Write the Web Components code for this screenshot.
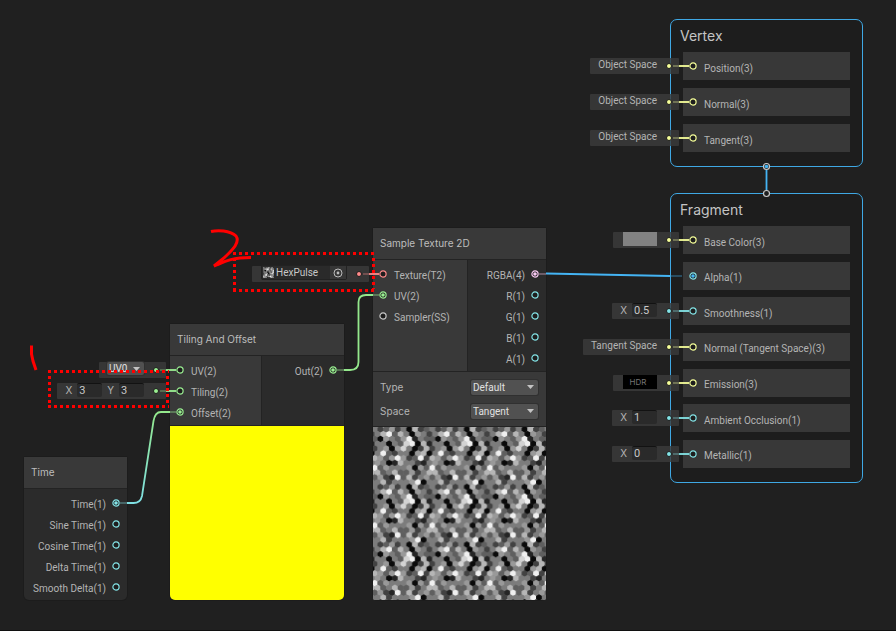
<!DOCTYPE html>
<html lang="en">
<head>
<meta charset="utf-8">
<title>Shader Graph</title>
<style>
  body {
    margin: 0;
    background: #202020;
    color: #b4b4b4;
    font: 10px/16px Roboto, "Liberation Sans", sans-serif;
  }
</style>
</head>
<body>
<shader-graph>
  <graph-node style="left: 24px; top: 457px; width: 103px" name="Time">
    <graph-port slot="out" side="out" type="float" linked>Time(1)</graph-port>
    <graph-port slot="out" side="out" type="float">Sine Time(1)</graph-port>
    <graph-port slot="out" side="out" type="float">Cosine Time(1)</graph-port>
    <graph-port slot="out" side="out" type="float">Delta Time(1)</graph-port>
    <graph-port slot="out" side="out" type="float">Smooth Delta(1)</graph-port>
  </graph-node>

  <graph-node style="left: 170px; top: 324px; width: 174px; --inputs: 53%" name="Tiling And Offset" inputs>
    <graph-port slot="in" type="vec2">UV(2)
      <inline-value slot="value"><drop-down compact label="UV channel" value="UV0"></drop-down></inline-value>
    </graph-port>
    <graph-port slot="in" type="vec2">Tiling(2)
      <inline-value slot="value"><number-field label="X" value="3"></number-field><number-field label="Y" value="3"></number-field></inline-value>
    </graph-port>
    <graph-port slot="in" type="vec2" linked>Offset(2)</graph-port>
    <graph-port slot="out" side="out" type="vec2" linked>Out(2)</graph-port>
    <node-preview slot="preview" kind="solid"></node-preview>
  </graph-node>

  <graph-node style="left: 373px; top: 228px; width: 173px" name="Sample Texture 2D" inputs>
    <graph-port slot="in" type="texture">Texture(T2)
      <inline-value slot="value"><object-field value="HexPulse"></object-field></inline-value>
    </graph-port>
    <graph-port slot="in" type="vec2" linked>UV(2)</graph-port>
    <graph-port slot="in" type="sampler">Sampler(SS)</graph-port>
    <graph-port slot="out" side="out" type="vec4" linked>RGBA(4)</graph-port>
    <graph-port slot="out" side="out" type="float">R(1)</graph-port>
    <graph-port slot="out" side="out" type="float">G(1)</graph-port>
    <graph-port slot="out" side="out" type="float">B(1)</graph-port>
    <graph-port slot="out" side="out" type="float">A(1)</graph-port>
    <node-settings slot="settings">
      <drop-down label="Type" value="Default" show-label></drop-down>
      <drop-down label="Space" value="Tangent" show-label></drop-down>
    </node-settings>
    <node-preview slot="preview" kind="hex"></node-preview>
  </graph-node>

  <block-stack style="left: 670px; top: 19px; width: 193px; height: 148px" name="Vertex">
    <graph-port type="vec3">Position(3)<inline-value slot="value">Object Space</inline-value></graph-port>
    <graph-port type="vec3">Normal(3)<inline-value slot="value">Object Space</inline-value></graph-port>
    <graph-port type="vec3">Tangent(3)<inline-value slot="value">Object Space</inline-value></graph-port>
  </block-stack>

  <block-stack style="left: 670px; top: 193px; width: 193px; height: 290px" name="Fragment">
    <graph-port type="vec3">Base Color(3)<inline-value slot="value"><color-swatch label="Base Color" color="#828282"></color-swatch></inline-value></graph-port>
    <graph-port type="float" linked="#44b4f4">Alpha(1)</graph-port>
    <graph-port type="float">Smoothness(1)<inline-value slot="value"><number-field label="X" value="0.5"></number-field></inline-value></graph-port>
    <graph-port type="vec3">Normal (Tangent Space)(3)<inline-value slot="value">Tangent Space</inline-value></graph-port>
    <graph-port type="vec3">Emission(3)<inline-value slot="value"><color-swatch label="Emission" color="#000000">HDR</color-swatch></inline-value></graph-port>
    <graph-port type="float">Ambient Occlusion(1)<inline-value slot="value"><number-field label="X" value="1"></number-field></inline-value></graph-port>
    <graph-port type="float">Metallic(1)<inline-value slot="value"><number-field label="X" value="0"></number-field></inline-value></graph-port>
  </block-stack>

  <graph-wires slot="overlay"></graph-wires>
  <hand-notes slot="overlay"></hand-notes>
</shader-graph>

<script>
const PORT_COLORS = {
  float: "#84e4e7",
  vec2: "#9aef92",
  vec3: "#f6ff9a",
  vec4: "#fbcbf4",
  texture: "#ff8b8b",
  sampler: "#c8c8c8",
};

/**
 * Base class: every component renders its markup once into an open root
 */
class GraphElement extends HTMLElement {
  constructor() {
    super();
    this.attachShadow({ mode: "open" });
  }

  connectedCallback() {
    this.shadowRoot.innerHTML = this.render();
  }
}

/**
 * Canvas that holds nodes, wires and notes
 */
class ShaderGraph extends GraphElement {
  render() {
    return `
      <style>
        :host {
          display: block;
          position: relative;
          box-sizing: border-box;
          min-height: 100vh;
          overflow: hidden;
          border-bottom: 1px solid #101010;
        }
      </style>
      <slot></slot>
      <slot name="overlay"></slot>
    `;
  }
}

/**
 * Node with a title, port columns, settings and preview
 */
class GraphNode extends GraphElement {
  render() {
    const inputs = this.hasAttribute("inputs")
      ? `<div class="in"><slot name="in"></slot></div>`
      : "";
    return `
      <style>
        :host {
          display: flex;
          flex-direction: column;
          position: absolute;
          background: #2b2b2b;
          border-radius: 2px 2px 5px 5px;
          box-shadow: 0 0 0 1px #1c1c1c;
        }
        header {
          height: 29px;
          display: flex;
          align-items: center;
          padding: 0 7px 2px;
          background: #393939;
          border-bottom: 1px solid #232323;
          color: #bdbdbd;
          font-family: Inter, "Liberation Sans", sans-serif;
        }
        .ports { display: flex; }
        .in, .out { padding: 3px 0; }
        .in {
          box-sizing: border-box;
          width: var(--inputs, 55%);
          background: #393939;
          border-right: 1px solid #232323;
        }
        .out { flex: 1; }
      </style>
      <header>${this.getAttribute("name")}</header>
      <div class="ports">${inputs}<div class="out"><slot name="out"></slot></div></div>
      <slot name="settings"></slot>
      <slot name="preview"></slot>
    `;
  }
}

/**
 * Port row: socket, label and an optional value attached to its left
 *
 * Attributes:
 * - type: key of PORT_COLORS
 * - side: 'in' (default) or 'out'
 * - linked: fills the socket, optionally with a colour of its own
 */
class GraphPort extends GraphElement {
  render() {
    const color = PORT_COLORS[this.getAttribute("type")];
    const dot = this.hasAttribute("linked")
      ? `<circle cx="4" cy="4" r="1.8" fill="${this.getAttribute("linked") || color}"/>`
      : "";
    const value = this.querySelector("inline-value")
      ? `<div class="value"><slot name="value"></slot></div>`
      : "";
    return `
      <style>
        :host {
          --port: ${color};
          display: flex;
          align-items: center;
          gap: 7px;
          position: relative;
          height: 21px;
          padding: 0 6px;
          white-space: nowrap;
        }
        :host([side="out"]) {
          flex-direction: row-reverse;
          gap: 6px;
          padding: 0 7px;
        }
        svg { flex: none; }
        .label { padding-top: 5px; }
        .value {
          position: absolute;
          right: calc(100% - 6px);
          display: flex;
          align-items: center;
        }
        .value::after {
          content: "";
          width: 10px;
          height: 2px;
          background: var(--port);
          opacity: .9;
        }
      </style>
      ${value}
      <svg width="8" height="8" viewBox="0 0 8 8">
        <circle cx="4" cy="4" r="3.1" fill="#1d1d1d" stroke="${color}" stroke-width="1.2"/>${dot}
      </svg>
      <span class="label"><slot></slot></span>
    `;
  }
}

/**
 * Default value plugged into an unconnected port
 */
class InlineValue extends GraphElement {
  render() {
    return `
      <style>
        :host {
          display: flex;
          align-items: center;
          height: 16px;
          padding-left: 8px;
          background: rgba(60, 60, 60, .8);
          border-radius: 1px;
          color: #b4b4b4;
        }
        .content {
          display: flex;
          align-items: center;
          gap: 5px;
          padding-bottom: 2px;
        }
        .jack {
          display: flex;
          align-items: center;
          gap: 1px;
          margin-left: 9px;
        }
        i {
          width: 4px;
          height: 4px;
          border-radius: 50%;
          background: var(--port);
          border: 1px solid #1b1b1b;
        }
        b {
          width: 6px;
          height: 2px;
          background: var(--port);
          opacity: .3;
        }
      </style>
      <span class="content"><slot></slot></span>
      <span class="jack"><i></i><b></b></span>
    `;
  }
}

/**
 * Labelled number box
 */
class NumberField extends GraphElement {
  render() {
    return `
      <style>
        :host { display: block; }
        label {
          display: flex;
          align-items: center;
          gap: 5px;
          font-family: Inter, "Liberation Sans", sans-serif;
        }
        input {
          box-sizing: border-box;
          width: 25px;
          height: 14px;
          padding: 0 2px;
          background: #2a2a2a;
          border: 0;
          border-top: 1px solid #121212;
          border-radius: 2px;
          color: #c8c8c8;
          font: 11px/13px Roboto, "Liberation Sans", sans-serif;
        }
      </style>
      <label>${this.getAttribute("label")}<input value="${this.getAttribute("value")}"></label>
    `;
  }
}

/**
 * Drop-down, with its label shown or only announced
 */
class DropDown extends GraphElement {
  render() {
    const label = this.getAttribute("label");
    const value = this.getAttribute("value");
    const text = this.hasAttribute("show-label") ? `<label for="s">${label}</label>` : "";
    return `
      <style>
        :host {
          display: flex;
          align-items: center;
          justify-content: space-between;
        }
        .box {
          display: flex;
          position: relative;
          width: 67px;
        }
        :host([compact]) .box { width: 37px; }
        label { font-family: Inter, "Liberation Sans", sans-serif; }
        select {
          appearance: none;
          width: 100%;
          height: 15px;
          padding: 0 2px;
          background: #515151;
          border: 0;
          border-radius: 2px;
          box-shadow: 0 0 0 1px #303030;
          color: #e0e0e0;
          font: 10px/15px Roboto, "Liberation Sans", sans-serif;
        }
        :host([compact]) select { height: 13px; line-height: 13px; }
        svg {
          position: absolute;
          right: 4px;
          top: 5px;
          pointer-events: none;
        }
      </style>
      ${text}
      <span class="box">
        <select id="s" aria-label="${label}"><option>${value}</option></select>
        <svg width="7" height="4" viewBox="0 0 7 4"><path d="M0 0h7L3.500 4z" fill="#c4c4c4"/></svg>
      </span>
    `;
  }
}

/**
 * Colour button; the slot holds an optional caption
 */
class ColorSwatch extends GraphElement {
  render() {
    return `
      <style>
        :host { display: flex; padding-left: 2px; }
        button {
          width: 34px;
          height: 14px;
          padding: 0 4px 0 0;
          background: ${this.getAttribute("color")};
          border: 0;
          color: #747474;
          font: 8px/14px Inter, "Liberation Sans", sans-serif;
        }
      </style>
      <button type="button" aria-label="${this.getAttribute("label")}"><slot></slot></button>
    `;
  }
}

/**
 * Asset reference with thumbnail and picker button
 */
class ObjectField extends GraphElement {
  render() {
    return `
      <style>
        :host {
          display: flex;
          align-items: center;
          box-sizing: border-box;
          width: 86px;
          height: 15px;
          margin-left: 1px;
          background: #2a2a2a;
          border: 1px solid #222;
          border-radius: 2px;
          color: #c8c8c8;
        }
        .thumb { flex: none; margin: 0 2px 0 1px; }
        .name { flex: 1; }
        button {
          display: flex;
          align-items: center;
          justify-content: center;
          width: 16px;
          height: 13px;
          padding: 0;
          background: #363636;
          border: 0;
        }
      </style>
      <svg class="thumb" width="11" height="11" viewBox="0 0 36 36"><rect width="36" height="36" fill="#888"/>${hexTile()}</svg>
      <span class="name">${this.getAttribute("value")}</span>
      <button type="button" aria-label="Pick texture">
        <svg width="10" height="10" viewBox="0 0 10 10">
          <circle cx="5" cy="5" r="4" fill="none" stroke="#bbb"/>
          <circle cx="5" cy="5" r="1.4" fill="#bbb"/>
        </svg>
      </button>
    `;
  }
}

/**
 * Settings strip under the ports
 */
class NodeSettings extends GraphElement {
  render() {
    return `
      <style>
        :host {
          display: grid;
          grid-auto-rows: 24px;
          padding: 3px 8px 3px 7px;
          background: #393939;
          border-top: 1px solid #232323;
          border-bottom: 1px solid #232323;
        }
      </style>
      <slot></slot>
    `;
  }
}

// Brightness of each cell of the pulse texture, 0 (black) to 9 (white)
const HEX_ROWS = [
  "5346350734",
  "5794751653",
  "4165469254",
  "5515489072",
  "3560685037",
  "5943551671",
  "7646963493",
  "6512755325",
  "9465556064",
  "7457446357",
  "4632947356",
  "5735556905",
];

/**
 * One 58x58 tile of staggered hexagons, wrapped at its edges
 */
function hexTile() {
  const w = 58 / 10;
  const h = 58 / 12;
  let cells = "";
  // rows -1 and 12 repeat the opposite edge so that the seams close
  for (let r = -1; r <= 12; r++) {
    const row = HEX_ROWS[(r + 12) % 12];
    const shift = r % 2 ? w * 0.8 : w * 0.3;
    for (let c = -1; c <= 10; c++) {
      const level = Number(row[(c + 10) % 10]);
      const v = Math.max(10, Math.min(250, Math.round(124 + (level - 5) * 29)));
      const x = c * w + shift;
      const y = (r + 0.5) * h;
      const pts = [[0, -3.3], [3, -1.7], [3, 1.7], [0, 3.3], [-3, 1.7], [-3, -1.7]]
        .map(([dx, dy]) => `${(x + dx).toFixed(1)},${(y + dy).toFixed(1)}`)
        .join(" ");
      cells += `<polygon points="${pts}" fill="rgb(${v},${v},${v})"/>`;
    }
  }
  return cells;
}

/**
 * Square preview: plain yellow or the pulse texture repeated three times
 */
class NodePreview extends GraphElement {
  render() {
    const hex = this.getAttribute("kind") === "hex";
    return `
      <style>
        :host {
          display: block;
          aspect-ratio: 1;
          overflow: hidden;
          border-radius: 0 0 5px 5px;
          border-top: 1px solid #232323;
          background: #ff0;
        }
        :host([kind="hex"]) {
          border-top: 0;
          border-radius: 0 0 2px 2px;
          background: #777;
        }
        svg { display: block; width: 100%; height: 100%; }
      </style>
      ${hex ? `<svg viewBox="0 0 174 174">
        <defs><pattern id="t" width="58" height="58" patternUnits="userSpaceOnUse">${hexTile()}</pattern></defs>
        <rect width="174" height="174" fill="url(#t)"/>
      </svg>` : ""}
    `;
  }
}

/**
 * Master stack: outlined list of blocks
 */
class BlockStack extends GraphElement {
  render() {
    return `
      <style>
        :host {
          display: flex;
          flex-direction: column;
          position: absolute;
          box-sizing: border-box;
          padding: 0 12px 14px;
          background: #1d1d1d;
          border: 1px solid #3fa8e4;
          border-radius: 7px;
        }
        h2 {
          margin: 0 0 0 -3px;
          padding: 6px 0;
          font: 14px/20px Inter, "Liberation Sans", sans-serif;
          color: #c4c4c4;
        }
        .blocks {
          flex: 1;
          display: grid;
          grid-auto-rows: 28px;
          align-content: space-between;
        }
        ::slotted(graph-port) {
          height: auto !important;
          background: #383838;
        }
      </style>
      <h2>${this.getAttribute("name")}</h2>
      <div class="blocks"><slot></slot></div>
    `;
  }
}

/**
 * Edges between sockets; the part under a node is drawn faint
 */
class GraphWires extends GraphElement {
  render() {
    return `
      <style>
        :host { position: absolute; inset: 0; pointer-events: none; }
        svg { display: block; }
        path { fill: none; stroke-width: 1.8; }
        .faint { opacity: .35; }
      </style>
      <svg width="896" height="631">
        <defs>
          <linearGradient id="g" x1="0" y1="1" x2="0" y2="0">
            <stop offset="0" stop-color="#7fe0e4"/><stop offset="1" stop-color="#94e88c"/>
          </linearGradient>
        </defs>
        <path d="M127 503H133.500Q140.500 503 142 496L153.500 421Q155 412 161 412H170" stroke="url(#g)"/>
        <path class="faint" d="M120 503H127" stroke="#84e4e7"/>
        <path class="faint" d="M170 412H176M337 370H344M373 295H379" stroke="#9aef92"/>
        <path d="M344 370H350Q358.500 370 358.500 362V302Q358.500 295 366 295H373" stroke="#94e88c"/>
        <path class="faint" d="M539 274H546" stroke="#fbcbf4"/>
        <path d="M546 273.500L670 276" stroke="#44b4f4"/>
        <path class="faint" d="M671 276H682" stroke="#44b4f4"/>
        <path d="M766.500 167V193" stroke="#44b4f4"/>
        <g fill="#1d1d1d" stroke="#c8c8c8" stroke-width="1.2">
          <circle cx="766.5" cy="166.5" r="3"/>
          <circle cx="766.5" cy="193.5" r="3"/>
        </g>
        <circle cx="766.5" cy="166.5" r="1.8" fill="#44b4f4"/>
      </svg>
    `;
  }
}

/**
 * Red pen marks over the graph
 */
class HandNotes extends GraphElement {
  render() {
    return `
      <style>
        :host { position: absolute; inset: 0; pointer-events: none; }
        svg { display: block; }
      </style>
      <svg width="896" height="631" fill="none" stroke="#f00" stroke-width="3">
        <path d="M31.500 345.500V354L33 361L36 370"/>
        <path d="M211 231.500C217 230 230 230 236 236C241 243 230 252 224 258L214 266C222 263 229 257.500 251 257.500"/>
        <g stroke-dasharray="3 3">
          <path d="M48 371.500H169M48 406.500H169M49.500 376V405M167.500 376V405"/>
          <path d="M233 253.500H375M233 290.500H375M234.500 258V289M373.500 258V289"/>
        </g>
      </svg>
    `;
  }
}

customElements.define("graph-port", GraphPort);
customElements.define("graph-node", GraphNode);
customElements.define("inline-value", InlineValue);
customElements.define("number-field", NumberField);
customElements.define("drop-down", DropDown);
customElements.define("color-swatch", ColorSwatch);
customElements.define("object-field", ObjectField);
customElements.define("node-settings", NodeSettings);
customElements.define("node-preview", NodePreview);
customElements.define("block-stack", BlockStack);
customElements.define("graph-wires", GraphWires);
customElements.define("hand-notes", HandNotes);
customElements.define("shader-graph", ShaderGraph);
</script>
</body>
</html>
